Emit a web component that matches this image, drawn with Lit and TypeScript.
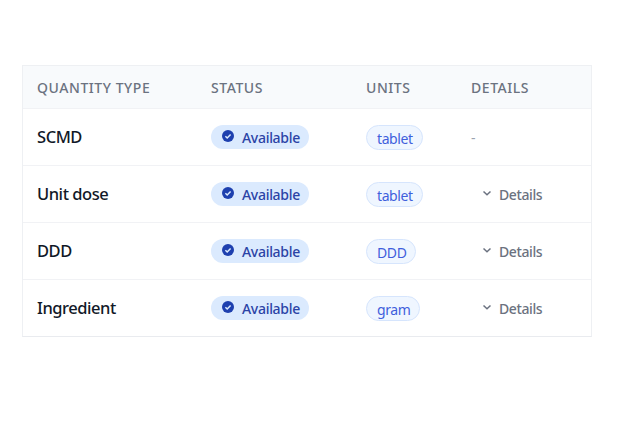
import { LitElement, html, css } from "lit";
import { customElement } from "lit/decorators.js";

const rows = [
  { name: "SCMD", unit: "tablet", details: false },
  { name: "Unit dose", unit: "tablet", details: true },
  { name: "DDD", unit: "DDD", details: true },
  { name: "Ingredient", unit: "gram", details: true },
];

@customElement("app-root")
export class AppRoot extends LitElement {
  static styles = css`
    :host {
      display: block;
      width: 617px;
      height: 434px;
      box-sizing: border-box;
      padding: 65px 25px 0 22px;
      background: #fff;
      font-family: "Noto Sans", sans-serif;
    }
    .table {
      border: 1px solid #eef0f3;
      border-bottom-color: #e9ebef;
    }
    .row {
      display: grid;
      grid-template-columns: 174px 155px 105px 1fr;
      padding-left: 14px;
      align-items: center;
      height: 56px;
      border-top: 1px solid #f1f2f5;
    }
    .head {
      height: 42px;
      border-top: 0;
      background: #f8fafc;
      color: #6b7280;
      font-size: 14px;
      font-weight: 500;
      letter-spacing: 0.55px;
    }
    .name {
      font-size: 16.5px;
      font-weight: 500;
      letter-spacing: -0.45px;
      color: #111827;
      margin-bottom: 2px;
    }
    .badge {
      display: inline-flex;
      align-items: center;
      gap: 7px;
      height: 24px;
      padding: 0 9px 0 10px;
      border-radius: 12px;
      background: #dbeafe;
      color: #2b43a6;
      font-size: 14px;
      font-weight: 500;
      letter-spacing: -0.3px;
      width: max-content;
    }
    .badge svg { width: 14px; height: 14px; margin-top: -2px; }
    .unit {
      display: inline-block;
      width: max-content;
      box-sizing: border-box;
      height: 25px;
      line-height: 25px;
      padding: 0 9px 0 10px;
      border: 1px solid #d6e5fd;
      border-radius: 13px;
      background: #eff6ff;
      color: #3f5fdc;
      font-size: 14px;
      letter-spacing: -0.4px;
    }
    .dash { color: #9ca3af; font-size: 14px; }
    .more {
      display: flex;
      align-items: center;
      gap: 6px;
      padding-left: 10px;
      color: #6b7280;
      font-size: 14px;
      font-weight: 500;
      letter-spacing: -0.4px;
    }
    .more svg { width: 12px; height: 12px; margin-top: -2px; }
  `;

  render() {
    return html`
      <div class="table">
        <div class="row head">
          <div>QUANTITY TYPE</div><div>STATUS</div><div>UNITS</div><div>DETAILS</div>
        </div>
        ${rows.map(
          (r) => html`
            <div class="row">
              <div class="name">${r.name}</div>
              <div class="badge">
                <svg viewBox="0 0 14 14">
                  <circle cx="7" cy="7" r="6" fill="#1e40af"></circle>
                  <path d="M4.4 7.2 6.2 9l3.4-3.6" fill="none" stroke="#dbeafe" stroke-width="1.5"></path>
                </svg>
                Available
              </div>
              <div class="unit">${r.unit}</div>
              ${r.details
                ? html`<div class="more">
                    <svg viewBox="0 0 12 12"><path d="M2.5 4.5 6 7.8l3.5-3.3" fill="none" stroke="#6b7280" stroke-width="1.5"></path></svg>
                    Details
                  </div>`
                : html`<div class="dash">-</div>`}
            </div>
          `
        )}
      </div>
    `;
  }
}
